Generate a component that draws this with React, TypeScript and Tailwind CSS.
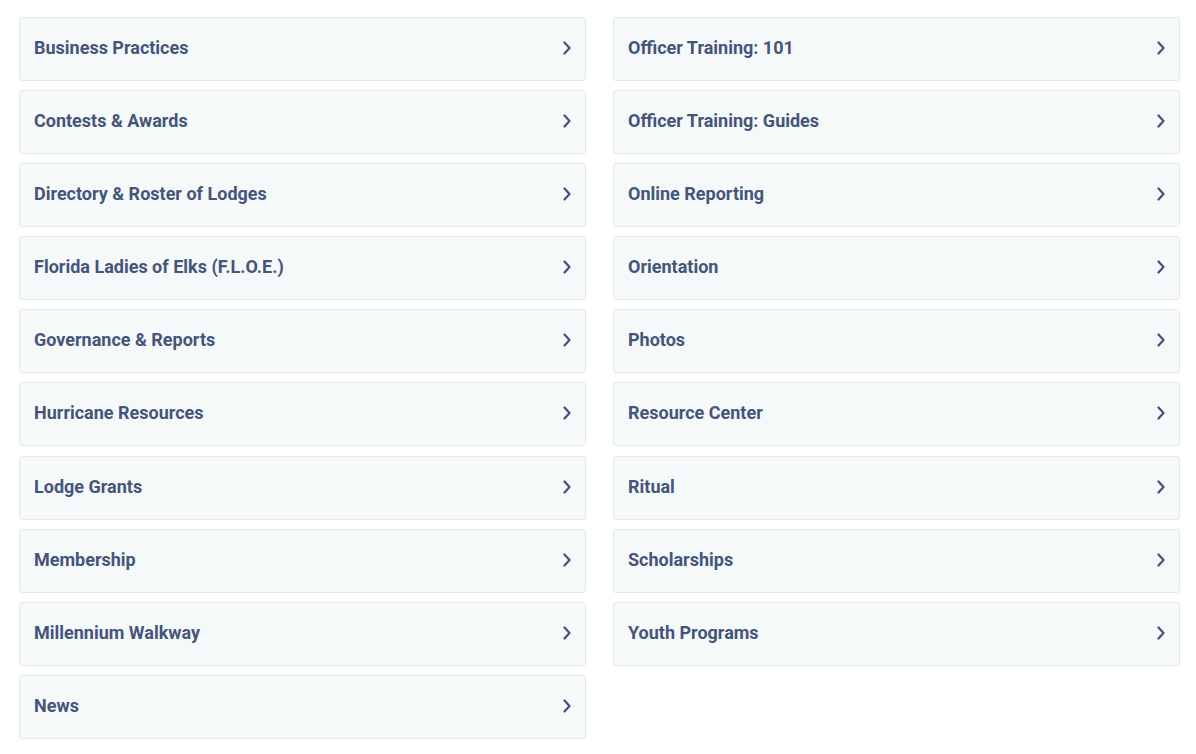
import React from "react";

const left = [
  "Business Practices",
  "Contests & Awards",
  "Directory & Roster of Lodges",
  "Florida Ladies of Elks (F.L.O.E.)",
  "Governance & Reports",
  "Hurricane Resources",
  "Lodge Grants",
  "Membership",
  "Millennium Walkway",
  "News",
];

const right = [
  "Officer Training: 101",
  "Officer Training: Guides",
  "Online Reporting",
  "Orientation",
  "Photos",
  "Resource Center",
  "Ritual",
  "Scholarships",
  "Youth Programs",
];

const Chevron = () => (
  <svg width="10" height="14" viewBox="0 0 10 14" fill="none" className="shrink-0 mb-[2px]">
    <path d="M2.5 1.5 L7.5 7 L2.5 12.5" stroke="#42527a" strokeWidth="2.2" strokeLinecap="round" strokeLinejoin="round" />
  </svg>
);

const Item = ({ label }: { label: string }) => (
  <a className="flex items-center justify-between h-[64px] pl-[14px] pr-[13px] bg-[#f5f9fa] border border-[#e3e9ee] rounded-[3px] cursor-pointer">
    <span className="pb-[3px] text-[18px] font-bold text-[#45557a]">{label}</span>
    <Chevron />
  </a>
);

export default function App() {
  return (
    <div className="min-h-screen bg-white pt-[17px] pl-[19px] font-['Roboto',sans-serif]">
      <div className="flex gap-[27px] items-start">
        <div className="w-[567px] flex flex-col gap-[9.1px]">
          {left.map((l) => (
            <Item key={l} label={l} />
          ))}
        </div>
        <div className="w-[567px] flex flex-col gap-[9.1px]">
          {right.map((l) => (
            <Item key={l} label={l} />
          ))}
        </div>
      </div>
    </div>
  );
}
